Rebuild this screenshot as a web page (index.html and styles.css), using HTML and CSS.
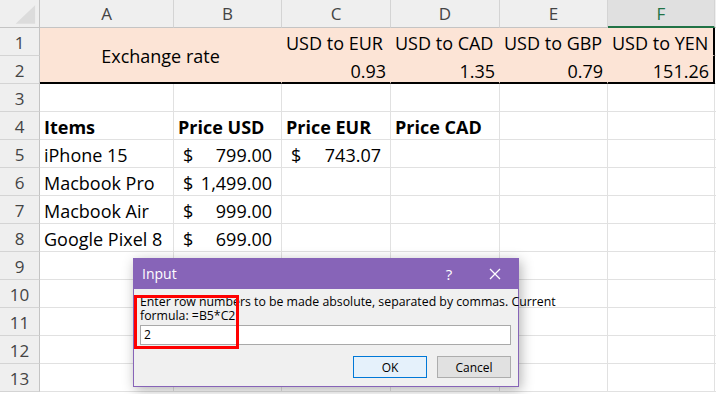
FILE: index.html
```html
<!DOCTYPE html>
<html lang="en">
<head>
    <meta charset="UTF-8">
    <title>Exchange rate - Input</title>
    <link rel="stylesheet" href="styles.css">
</head>
<body>

<div class="sheet">
    <!-- column headers -->
    <div class="c hd corner">
        <svg width="40" height="28" viewBox="0 0 40 28"><polygon points="16,24 36,24 36,5" fill="#dcdcdc"/></svg>
    </div>
    <div class="c hd">A</div>
    <div class="c hd">B</div>
    <div class="c hd">C</div>
    <div class="c hd">D</div>
    <div class="c hd">E</div>
    <div class="c hd active">F</div>
    <div class="c hd"></div>

    <!-- rows 1-2: exchange rates -->
    <div class="c rh">1</div>
    <div class="c fill merged bot">Exchange rate</div>
    <div class="c fill">USD to EUR</div>
    <div class="c fill">USD to CAD</div>
    <div class="c fill">USD to GBP</div>
    <div class="c fill rt">USD to YEN</div>
    <div class="c"></div>

    <div class="c rh">2</div>
    <div class="c fill bot num">0.93</div>
    <div class="c fill bot num">1.35</div>
    <div class="c fill bot num">0.79</div>
    <div class="c fill bot rt num">151.26</div>
    <div class="c"></div>

    <div class="c rh">3</div>
    <div class="c"></div><div class="c"></div><div class="c"></div><div class="c"></div><div class="c"></div><div class="c"></div><div class="c"></div>

    <div class="c rh">4</div>
    <div class="c b">Items</div>
    <div class="c b">Price USD</div>
    <div class="c b">Price EUR</div>
    <div class="c b">Price CAD</div>
    <div class="c"></div><div class="c"></div><div class="c"></div>

    <div class="c rh">5</div>
    <div class="c">iPhone 15</div>
    <div class="c acc"><span>$</span><span>799.00</span></div>
    <div class="c acc"><span>$</span><span>743.07</span></div>
    <div class="c"></div><div class="c"></div><div class="c"></div><div class="c"></div>

    <div class="c rh">6</div>
    <div class="c">Macbook Pro</div>
    <div class="c acc"><span>$</span><span>1,499.00</span></div>
    <div class="c"></div><div class="c"></div><div class="c"></div><div class="c"></div><div class="c"></div>

    <div class="c rh">7</div>
    <div class="c">Macbook Air</div>
    <div class="c acc"><span>$</span><span>999.00</span></div>
    <div class="c"></div><div class="c"></div><div class="c"></div><div class="c"></div><div class="c"></div>

    <div class="c rh">8</div>
    <div class="c">Google Pixel 8</div>
    <div class="c acc"><span>$</span><span>699.00</span></div>
    <div class="c"></div><div class="c"></div><div class="c"></div><div class="c"></div><div class="c"></div>

    <div class="c rh">9</div>
    <div class="c"></div><div class="c"></div><div class="c"></div><div class="c"></div><div class="c"></div><div class="c"></div><div class="c"></div>
    <div class="c rh">10</div>
    <div class="c"></div><div class="c"></div><div class="c"></div><div class="c"></div><div class="c"></div><div class="c"></div><div class="c"></div>
    <div class="c rh">11</div>
    <div class="c"></div><div class="c"></div><div class="c"></div><div class="c"></div><div class="c"></div><div class="c"></div><div class="c"></div>
    <div class="c rh">12</div>
    <div class="c"></div><div class="c"></div><div class="c"></div><div class="c"></div><div class="c"></div><div class="c"></div><div class="c"></div>
    <div class="c rh">13</div>
    <div class="c"></div><div class="c"></div><div class="c"></div><div class="c"></div><div class="c"></div><div class="c"></div><div class="c"></div>
</div>

<div class="dialog">
    <div class="dialog-title">
        <span class="title-text">Input</span>
        <span class="title-help">?</span>
        <span class="title-close">
            <svg width="12" height="12" viewBox="0 0 12 12"><path d="M1 1 L11 11 M11 1 L1 11" stroke="#fff" stroke-width="1.3" fill="none"/></svg>
        </span>
    </div>
    <div class="dialog-body">
        <p class="prompt">Enter row numbers to be made absolute, separated by commas. Current<br>formula: =B5*C2</p>
        <div class="text-box">2</div>
        <div class="buttons">
            <button class="btn btn-ok">OK</button>
            <button class="btn">Cancel</button>
        </div>
    </div>
</div>

<!-- red highlight drawn over the dialog -->
<div class="highlight"></div>

</body>
</html>
```

FILE: styles.css
```css
body {
    margin: 0;
    background: #fff;
    overflow: hidden;
    width: 716px;
    height: 394px;
    position: relative;
}

.sheet {
    display: grid;
    grid-template-columns: 40px 134px 108px 109px 109px 108px 107px 1fr;
    grid-auto-rows: 28px;
    font-family: "Open Sans", sans-serif;
    font-size: 18px;
    color: #000;
}

.c {
    box-sizing: border-box;
    border-right: 1px solid #e1e1e1;
    border-bottom: 1px solid #e1e1e1;
    display: flex;
    align-items: flex-end;
    padding: 0 4px 1px 4px;
    line-height: 22px;
    white-space: nowrap;
    min-width: 0;
}

.hd {
    background: #efefef;
    color: #444;
    justify-content: center;
    font-size: 17px;
    border-right-color: #d4d4d4;
    border-bottom-color: #c4c4c4;
    padding-bottom: 2px;
}

.corner {
    padding: 0;
    align-items: stretch;
    border-right-color: #c4c4c4;
}

.active {
    background: #e0e0e0;
    color: #217346;
    border-bottom: 2px solid #217346;
    padding-bottom: 1px;
}

.rh {
    background: #efefef;
    color: #444;
    justify-content: center;
    font-size: 17px;
    border-right-color: #c4c4c4;
    border-bottom-color: #d4d4d4;
}

.fill {
    background: #fce4d6;
    border-color: transparent;
}

.merged {
    grid-column: span 2;
    grid-row: span 2;
    align-items: center;
    justify-content: center;
    padding-top: 2px;
}

.bot {
    border-bottom: 2px solid #000;
}

.rt {
    border-right: 2px solid #000;
}

.num {
    justify-content: flex-end;
    padding-bottom: 0;
}

.b {
    font-weight: bold;
}

.acc {
    justify-content: space-between;
    padding: 0 9px 1px 9px;
}

/* dialog */
.dialog {
    position: absolute;
    left: 133px;
    top: 258px;
    width: 386px;
    box-sizing: border-box;
    border: 1px solid #8764b8;
    border-top: none;
    background: #f0f0f0;
    box-shadow: 2px 3px 12px rgba(0, 0, 0, 0.3);
    font-family: "Open Sans", sans-serif;
    color: #000;
}

.dialog-title {
    height: 31px;
    background: #8764b8;
    margin: 0 -1px;
    display: flex;
    align-items: center;
    color: #fff;
    font-size: 14px;
}

.title-text {
    padding-left: 9px;
    flex: 1;
}

.title-help {
    width: 20px;
    text-align: center;
    font-size: 15px;
    margin-right: 30px;
}

.title-close {
    display: flex;
    margin-right: 18px;
}

.dialog-body {
    padding: 6px 7px 8px 6px;
}

.prompt {
    margin: 0;
    font-size: 12.3px;
    line-height: 14px;
    white-space: nowrap;
}

.text-box {
    margin-top: 2px;
    height: 20px;
    box-sizing: border-box;
    border: 1px solid #a9a9a9;
    background: #fff;
    font-size: 12px;
    line-height: 18px;
    padding-left: 3px;
}

.buttons {
    display: flex;
    justify-content: flex-end;
    gap: 10px;
    margin-top: 11px;
}

.btn {
    width: 74px;
    height: 22px;
    box-sizing: border-box;
    border: 1px solid #adadad;
    background: #e1e1e1;
    font-family: "Open Sans", sans-serif;
    font-size: 12px;
    padding: 0;
    color: #000;
}

.btn-ok {
    border-color: #0078d7;
    background: #e5f1fb;
}

.highlight {
    position: absolute;
    left: 134px;
    top: 295px;
    width: 105px;
    height: 54px;
    box-sizing: border-box;
    border: 3px solid #ff0000;
}
```
